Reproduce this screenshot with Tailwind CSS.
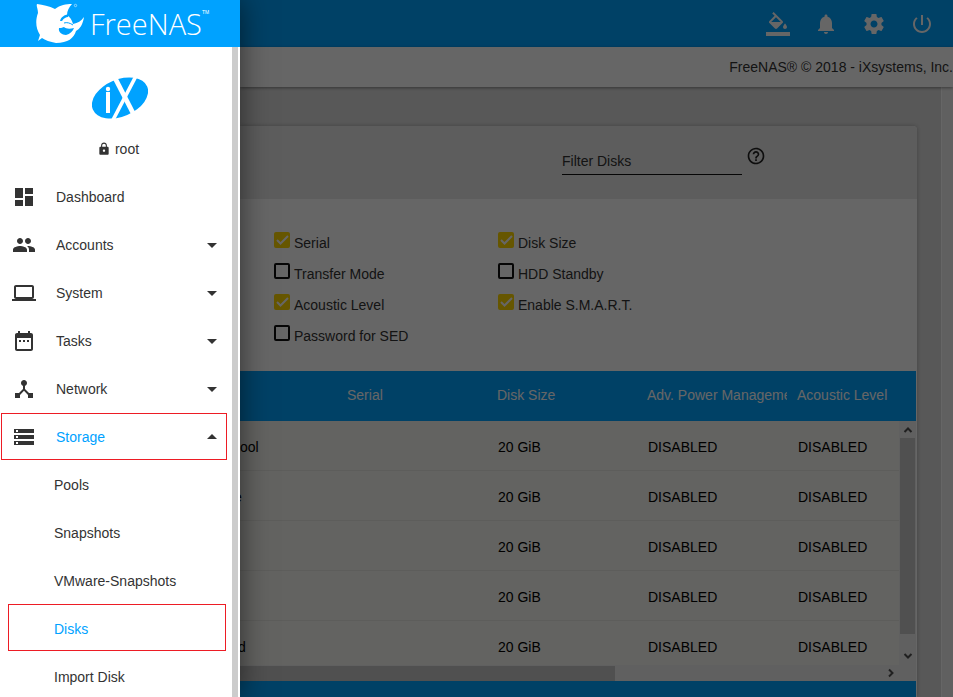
<!DOCTYPE html>
<html lang="en">
<head>
<meta charset="utf-8">
<meta name="viewport" content="width=device-width, initial-scale=1">
<title>FreeNAS - Disks</title>
<script src="https://cdn.jsdelivr.net/npm/@tailwindcss/browser@4"></script>
</head>
<body class="flex h-screen overflow-hidden bg-white text-sm text-[#333] font-['Liberation_Sans',Arial,sans-serif]">

<aside class="relative z-20 flex w-60 shrink-0 flex-col bg-white shadow-[0_0_28px_rgba(0,0,0,0.55)]">
  <a href="#" aria-label="FreeNAS home" class="flex h-[47px] shrink-0 items-center bg-[#00a2ff] pl-9 text-white">
    <svg class="h-[41px] w-12 shrink-0" viewBox="0 0 48 41" fill="#fff" aria-hidden="true">
      <path d="M1 1C7 2 13 3 19 6C24 2 30 1 36 1C33 4 31 8 31 12C34 14 36 17 37 21C42 20 45 18 48 14C47 21 44 26 40 28C38 35 32 40 20 40C14 39 9 37 6 35L2 38L4 32C0 26-1 18 2 10C2 6 0 3 1 1Z"/>
      <path d="M33 11C28 12 25 14 24 18L26 18C28 15 30 14 32 14Z" fill="#00a2ff"/>
      <path d="M23 25C22 29 26 32 30 32C34 31 37 28 38 25C34 26 30 26 28 24C26 25 24 25 23 25Z" fill="#00a2ff"/>
      <path d="M28 20C31 19 34 20 37 22" fill="none" stroke="#00a2ff" stroke-width="1"/>
      <circle cx="39.500" cy="2.500" r="1.200" fill="none" stroke="#fff" stroke-width=".5"/>
    </svg>
    <span class="ml-1.5 text-[29px] leading-none font-light font-['Open_Sans',sans-serif]">FreeNAS</span><span class="self-start pt-2.5 text-[5px] leading-none">TM</span>
  </a>
  <div class="flex min-h-0 flex-1 overflow-hidden">
    <div class="min-w-0 flex-1">
      <div class="flex h-[126px] flex-col items-center pt-[30px] pl-2">
        <svg class="h-[42px] w-14" viewBox="0 0 56 42" role="img" aria-label="iX">
          <ellipse cx="28" cy="21" rx="29.500" ry="18.500" transform="rotate(-23 28 21)" fill="#00a2ff"/>
          <g stroke="#fff" fill="none"><path d="M44-1L21 43" stroke-width="3.600"/><path d="M23 1L41 36" stroke-width="4.800"/><path d="M16 15V36" stroke-width="4"/></g>
          <circle cx="16" cy="12" r="2.200" fill="#fff"/>
        </svg>
        <div class="mt-5 flex items-center gap-1 pr-1 leading-5">
          <svg class="size-3.5" viewBox="0 0 24 24" fill="currentColor" aria-hidden="true"><path d="M18 8h-1V6c0-2.760-2.240-5-5-5S7 3.240 7 6v2H6c-1.100 0-2 .9-2 2v10c0 1.100.9 2 2 2h12c1.100 0 2-.9 2-2V10c0-1.100-.9-2-2-2zm-6 9c-1.100 0-2-.9-2-2s.9-2 2-2 2 .9 2 2-.9 2-2 2zm3.100-9H8.900V6c0-1.710 1.390-3.100 3.100-3.100s3.100 1.390 3.100 3.100v2z"/></svg>
          root
        </div>
      </div>
      <nav>
        <a href="#" class="flex h-12 items-center pl-3"><svg class="size-6" viewBox="0 0 24 24" fill="currentColor"><path d="M3 13h8V3H3v10zm0 8h8v-6H3v6zm10 0h8V11h-8v10zm0-18v6h8V3h-8z"/></svg><span class="ml-5">Dashboard</span></a>
        <a href="#" class="flex h-12 items-center pr-2 pl-3"><svg class="size-6" viewBox="0 0 24 24" fill="currentColor"><path d="M16 11c1.660 0 2.990-1.340 2.990-3S17.660 5 16 5c-1.660 0-3 1.340-3 3s1.340 3 3 3zm-8 0c1.660 0 2.990-1.340 2.990-3S9.660 5 8 5C6.340 5 5 6.340 5 8s1.340 3 3 3zm0 2c-2.330 0-7 1.170-7 3.500V19h14v-2.500c0-2.330-4.670-3.500-7-3.500zm8 0c-.29 0-.62.020-.97.050 1.160.84 1.970 1.970 1.970 3.450V19h6v-2.500c0-2.330-4.670-3.500-7-3.500z"/></svg><span class="ml-5 flex-1">Accounts</span><svg class="size-6" viewBox="0 0 24 24" fill="currentColor"><path d="M7 10l5 5 5-5z"/></svg></a>
        <a href="#" class="flex h-12 items-center pr-2 pl-3"><svg class="size-6" viewBox="0 0 24 24" fill="currentColor"><path d="M20 18c1.100 0 2-.9 2-2V6c0-1.100-.9-2-2-2H4c-1.100 0-2 .9-2 2v10c0 1.100.9 2 2 2H0v2h24v-2h-4zM4 6h16v10H4V6z"/></svg><span class="ml-5 flex-1">System</span><svg class="size-6" viewBox="0 0 24 24" fill="currentColor"><path d="M7 10l5 5 5-5z"/></svg></a>
        <a href="#" class="flex h-12 items-center pr-2 pl-3"><svg class="size-6" viewBox="0 0 24 24" fill="currentColor"><path d="M9 11H7v2h2v-2zm4 0h-2v2h2v-2zm4 0h-2v2h2v-2zm2-7h-1V2h-2v2H8V2H6v2H5c-1.110 0-1.990.9-1.990 2L3 20c0 1.100.89 2 2 2h14c1.100 0 2-.9 2-2V6c0-1.100-.9-2-2-2zm0 16H5V9h14v11z"/></svg><span class="ml-5 flex-1">Tasks</span><svg class="size-6" viewBox="0 0 24 24" fill="currentColor"><path d="M7 10l5 5 5-5z"/></svg></a>
        <a href="#" class="flex h-12 items-center pr-2 pl-3"><svg class="size-6" viewBox="0 0 24 24" fill="currentColor"><path d="M17 16l-4-4V8.820C14.160 8.400 15 7.300 15 6c0-1.660-1.340-3-3-3S9 4.340 9 6c0 1.300.84 2.400 2 2.820V12l-4 4H3v5h5v-3.050l4-4.200 4 4.200V21h5v-5h-4z"/></svg><span class="ml-5 flex-1">Network</span><svg class="size-6" viewBox="0 0 24 24" fill="currentColor"><path d="M7 10l5 5 5-5z"/></svg></a>
        <a href="#" class="mr-[5px] mb-px ml-px flex h-[47px] items-center border border-[#ed1c24] pr-0.5 pl-2.5"><svg class="size-6" viewBox="0 0 24 24" fill="currentColor"><path d="M2 20h20v-4H2v4zm2-3h2v2H4v-2zM2 4v4h20V4H2zm4 3H4V5h2v2zm-4 7h20v-4H2v4zm2-3h2v2H4v-2z"/></svg><span class="ml-5 flex-1 text-[#00a2ff]">Storage</span><svg class="size-6" viewBox="0 0 24 24" fill="currentColor"><path d="M7 14l5-5 5 5z"/></svg></a>
        <a href="#" class="flex h-12 items-center pl-[54px]">Pools</a>
        <a href="#" class="flex h-12 items-center pl-[54px]">Snapshots</a>
        <a href="#" class="flex h-12 items-center pl-[54px]">VMware-Snapshots</a>
        <a href="#" class="-mt-px mr-1.5 mb-0.5 ml-2 flex h-[47px] items-center border border-[#ed1c24] pt-0.5 pl-[45px] text-[#00a2ff]">Disks</a>
        <a href="#" class="flex h-12 items-center pl-[54px]">Import Disk</a>
      </nav>
    </div>
    <div class="mr-0.5 w-1.5 bg-[#ccc]"></div>
  </div>
</aside>

<main class="relative flex min-w-0 flex-1 flex-col bg-[#dcdcdc]">
  <header class="flex h-[47px] shrink-0 items-center justify-end bg-[#00a2ff] pr-[7px] text-white">
    <button aria-label="Theme" class="flex w-12 justify-center"><svg class="size-6" viewBox="0 0 24 24" fill="currentColor"><path d="M16.560 8.940L7.620 0 6.210 1.410l2.380 2.380-5.150 5.150c-.59.590-.59 1.540 0 2.120l5.500 5.500c.29.290.68.440 1.060.440s.77-.15 1.060-.44l5.500-5.500c.59-.58.59-1.530 0-2.120zM5.210 10L10 5.210 14.790 10H5.210zM19 11.500s-2 2.170-2 3.500c0 1.100.9 2 2 2s2-.9 2-2c0-1.330-2-3.500-2-3.500zM0 20h24v4H0z"/></svg></button>
    <button aria-label="Notifications" class="flex w-12 justify-center"><svg class="size-6" viewBox="0 0 24 24" fill="currentColor"><path d="M12 22c1.100 0 2-.9 2-2h-4c0 1.100.89 2 2 2zm6-6v-5c0-3.070-1.640-5.640-4.500-6.320V4c0-.83-.67-1.500-1.500-1.500s-1.500.67-1.500 1.500v.68C7.630 5.360 6 7.920 6 11v5l-2 2v1h16v-1l-2-2z"/></svg></button>
    <button aria-label="Settings" class="flex w-12 justify-center"><svg class="size-6" viewBox="0 0 24 24" fill="currentColor"><path d="M19.430 12.980c.04-.32.070-.64.070-.98s-.03-.66-.07-.98l2.110-1.650c.19-.15.240-.42.120-.64l-2-3.460c-.12-.22-.39-.3-.61-.22l-2.490 1c-.52-.4-1.080-.73-1.690-.98l-.38-2.650C14.460 2.180 14.250 2 14 2h-4c-.25 0-.46.180-.49.420l-.38 2.650c-.61.250-1.170.590-1.690.980l-2.490-1c-.23-.09-.49 0-.61.220l-2 3.460c-.13.220-.07.490.120.640l2.110 1.650c-.04.320-.07.650-.07.980s.03.660.070.980l-2.110 1.650c-.19.150-.24.420-.12.640l2 3.460c.12.220.39.300.61.220l2.490-1c.52.400 1.080.730 1.690.980l.38 2.650c.03.240.24.420.49.420h4c.25 0 .46-.18.490-.42l.38-2.650c.61-.25 1.170-.59 1.690-.98l2.490 1c.23.090.49 0 .61-.22l2-3.460c.12-.22.070-.49-.12-.64l-2.110-1.650zM12 15.500c-1.930 0-3.500-1.570-3.500-3.500s1.570-3.500 3.500-3.500 3.500 1.570 3.500 3.500-1.570 3.500-3.500 3.500z"/></svg></button>
    <button aria-label="Power" class="flex w-12 justify-center"><svg class="size-6" viewBox="0 0 24 24" fill="currentColor"><path d="M13 3h-2v10h2V3zm4.830 2.170l-1.420 1.420C17.990 7.860 19 9.810 19 12c0 3.870-3.130 7-7 7s-7-3.130-7-7c0-2.190 1.010-4.140 2.580-5.420L6.170 5.170C4.230 6.820 3 9.260 3 12c0 4.970 4.030 9 9 9s9-4.030 9-9c0-2.740-1.230-5.180-3.170-6.830z"/></svg></button>
  </header>
  <div class="z-[1] flex h-10 shrink-0 items-center justify-end bg-white shadow-[0_1px_3px_rgba(0,0,0,0.4)]">FreeNAS® © 2018 - iXsystems, Inc.</div>

  <div class="flex min-h-0 flex-1">
    <section class="mt-[39px] mr-6 flex min-w-0 flex-1 flex-col rounded-tr bg-white shadow-[0_0_4px_rgba(0,0,0,0.25)]">
      <div class="flex h-[73px] shrink-0 items-start justify-end rounded-tr bg-[#e8e8e8] pt-5 pr-[151px]">
        <input type="text" aria-label="Filter Disks" placeholder="Filter Disks" class="h-[29px] w-[180px] border-b border-[#111] bg-transparent pt-0.5 placeholder:text-[#333] outline-none">
        <svg class="ml-1 size-5" viewBox="0 0 24 24" fill="#222" role="img" aria-label="Help"><path d="M11 18h2v-2h-2v2zm1-16C6.480 2 2 6.480 2 12s4.480 10 10 10 10-4.480 10-10S17.520 2 12 2zm0 18c-4.410 0-8-3.590-8-8s3.590-8 8-8 8 3.590 8 8-3.590 8-8 8zm0-14c-2.210 0-4 1.790-4 4h2c0-1.100.9-2 2-2s2 .9 2 2c0 2-3 1.750-3 5h2c0-2.250 3-2.500 3-5 0-2.210-1.790-4-4-4z"/></svg>
      </div>
      <div class="grid h-[172px] shrink-0 grid-cols-[224px_1fr] grid-rows-[repeat(4,31px)] pt-[33px] pl-[34px] leading-[22px]">
        <label class="flex items-start gap-1"><input type="checkbox" checked class="peer size-4 appearance-none rounded-xs border-2 border-[#111] checked:border-[#ffd600] checked:bg-[#ffd600]"><svg class="-ml-5 hidden size-4 peer-checked:block" viewBox="0 0 16 16" fill="none" stroke="#fff" stroke-width="2"><path d="M3 8l3.500 3.500L14 4"/></svg>Serial</label>
        <label class="flex items-start gap-1"><input type="checkbox" checked class="peer size-4 appearance-none rounded-xs border-2 border-[#111] checked:border-[#ffd600] checked:bg-[#ffd600]"><svg class="-ml-5 hidden size-4 peer-checked:block" viewBox="0 0 16 16" fill="none" stroke="#fff" stroke-width="2"><path d="M3 8l3.500 3.500L14 4"/></svg>Disk Size</label>
        <label class="flex items-start gap-1"><input type="checkbox" class="size-4 appearance-none rounded-xs border-2 border-[#111]">Transfer Mode</label>
        <label class="flex items-start gap-1"><input type="checkbox" class="size-4 appearance-none rounded-xs border-2 border-[#111]">HDD Standby</label>
        <label class="flex items-start gap-1"><input type="checkbox" checked class="peer size-4 appearance-none rounded-xs border-2 border-[#111] checked:border-[#ffd600] checked:bg-[#ffd600]"><svg class="-ml-5 hidden size-4 peer-checked:block" viewBox="0 0 16 16" fill="none" stroke="#fff" stroke-width="2"><path d="M3 8l3.500 3.500L14 4"/></svg>Acoustic Level</label>
        <label class="flex items-start gap-1"><input type="checkbox" checked class="peer size-4 appearance-none rounded-xs border-2 border-[#111] checked:border-[#ffd600] checked:bg-[#ffd600]"><svg class="-ml-5 hidden size-4 peer-checked:block" viewBox="0 0 16 16" fill="none" stroke="#fff" stroke-width="2"><path d="M3 8l3.500 3.500L14 4"/></svg>Enable S.M.A.R.T.</label>
        <label class="flex items-start gap-1"><input type="checkbox" class="size-4 appearance-none rounded-xs border-2 border-[#111]">Password for SED</label>
      </div>
      <div class="relative mr-px min-h-0 flex-1 overflow-hidden bg-[#f7f7f2]">
        <table class="w-full table-fixed border-separate border-spacing-0 text-left text-black">
          <colgroup><col class="w-[97px]"><col class="w-[150px]"><col class="w-[150px]"><col class="w-[150px]"><col></colgroup>
          <thead class="bg-[#00a2ff] text-white [&_th]:pb-0.5">
            <tr class="h-[50px]">
              <th></th>
              <th class="px-2.5 font-normal">Serial</th>
              <th class="px-2.5 font-normal">Disk Size</th>
              <th class="pl-2.5 font-normal"><div class="overflow-hidden whitespace-nowrap">Adv. Power Management</div></th>
              <th class="px-2.5 font-normal">Acoustic Level</th>
            </tr>
          </thead>
          <tbody class="[&_td]:border-b [&_td]:border-[#e8e8e4] [&_td]:pt-[3px]">
            <tr class="h-[50px]"><td>ool</td><td></td><td class="px-[11px]">20 GiB</td><td class="px-[11px]">DISABLED</td><td class="px-[11px]">DISABLED</td></tr>
            <tr class="h-[50px]"><td><div class="-ml-1.5">e</div></td><td></td><td class="px-[11px]">20 GiB</td><td class="px-[11px]">DISABLED</td><td class="px-[11px]">DISABLED</td></tr>
            <tr class="h-[50px]"><td></td><td></td><td class="px-[11px]">20 GiB</td><td class="px-[11px]">DISABLED</td><td class="px-[11px]">DISABLED</td></tr>
            <tr class="h-[50px]"><td></td><td></td><td class="px-[11px]">20 GiB</td><td class="px-[11px]">DISABLED</td><td class="px-[11px]">DISABLED</td></tr>
            <tr class="h-[50px]"><td><div class="-ml-0.5">d</div></td><td></td><td class="px-[11px]">20 GiB</td><td class="px-[11px]">DISABLED</td><td class="px-[11px]">DISABLED</td></tr>
          </tbody>
        </table>
        <div class="absolute top-[50px] right-0 bottom-0 flex w-[17px] flex-col items-center bg-[#f1f1f1]">
          <svg class="h-[17px] w-4 shrink-0" viewBox="0 0 16 17" fill="none" stroke="#505050" stroke-width="2"><path d="M4.500 11L8 7.500L11.500 11"/></svg>
          <div class="w-[15px] flex-1 bg-[#c8c8c8]"></div>
          <div class="h-[31px] shrink-0 pt-3.5"><svg class="h-4 w-4" viewBox="0 0 16 16" fill="none" stroke="#505050" stroke-width="2"><path d="M4.500 6L8 9.500L11.500 6"/></svg></div>
        </div>
      </div>
      <div class="mr-px flex h-4 shrink-0 items-center bg-[#f1f1f1] pr-4">
        <div class="h-[15px] w-[375px] bg-[#c8c8c8]"></div>
        <svg class="ml-auto size-4" viewBox="0 0 16 16" fill="none" stroke="#505050" stroke-width="2"><path d="M5 4.500L8.500 8L5 11.500"/></svg>
      </div>
      <div class="mr-px h-4 shrink-0 bg-[#00a2ff]"></div>
    </section>
    <div class="w-3 shrink-0 border-l border-white bg-[#f1f1f1]"></div>
  </div>
  <div class="absolute inset-0 z-10 bg-black/60"></div>
</main>
</body>
</html>
